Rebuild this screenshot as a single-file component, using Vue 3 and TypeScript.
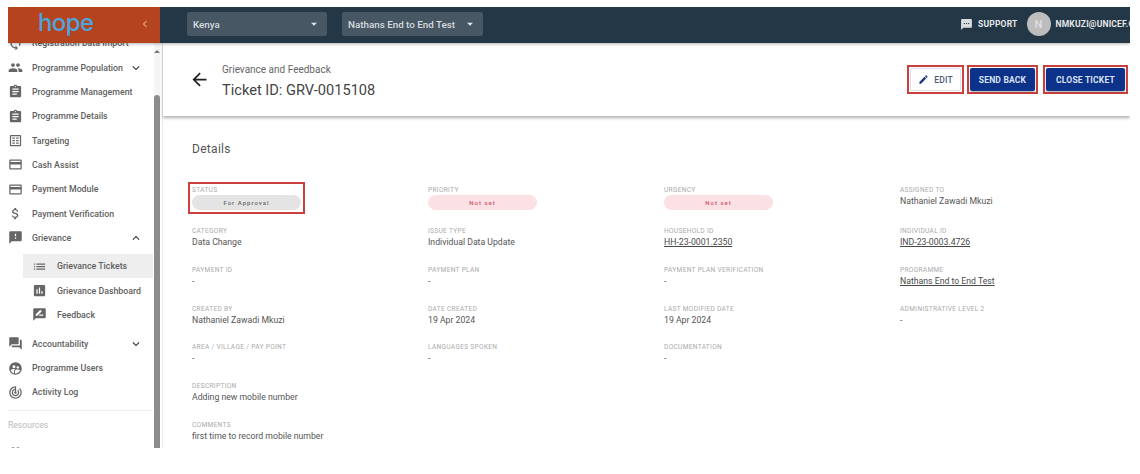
<script setup lang="ts">
interface NavItem { label: string; icon: string; sub?: boolean; active?: boolean; chevron?: 'up' | 'down' }
interface Field { label: string; value: string; kind?: 'link' | 'chip' | 'gray'; boxed?: boolean }

const P = {
  people: 'M16 11c1.66 0 2.99-1.34 2.99-3S17.66 5 16 5c-1.66 0-3 1.34-3 3s1.34 3 3 3zm-8 0c1.66 0 2.99-1.34 2.99-3S9.66 5 8 5C6.34 5 5 6.34 5 8s1.34 3 3 3zm0 2c-2.33 0-7 1.17-7 3.5V19h14v-2.5c0-2.33-4.67-3.5-7-3.5zm8 0c-.29 0-.62.02-.97.05 1.16.84 1.97 1.97 1.97 3.45V19h6v-2.5c0-2.33-4.67-3.5-7-3.5z',
  assignment: 'M19 3h-4.18C14.4 1.84 13.3 1 12 1c-1.3 0-2.4.84-2.82 2H5c-1.1 0-2 .9-2 2v14c0 1.1.9 2 2 2h14c1.1 0 2-.9 2-2V5c0-1.1-.9-2-2-2zm-7 0c.55 0 1 .45 1 1s-.45 1-1 1-1-.45-1-1 .45-1 1-1zm2 14H7v-2h7v2zm3-4H7v-2h10v2zm0-4H7V7h10v2z',
  target: 'M19 3H5c-1.1 0-2 .9-2 2v14c0 1.1.9 2 2 2h14c1.1 0 2-.9 2-2V5c0-1.1-.9-2-2-2zm0 16H5V5h14v14zM7 7h4v2H7V7zm6 0h4v2h-4V7zm-6 4h4v2H7v-2zm6 0h4v2h-4v-2zm-6 4h4v2H7v-2zm6 0h4v2h-4v-2z',
  card: 'M20 4H4c-1.11 0-1.99.89-1.99 2L2 18c0 1.11.89 2 2 2h16c1.11 0 2-.89 2-2V6c0-1.11-.89-2-2-2zm0 14H4v-6h16v6zm0-10H4V6h16v2z',
  money: 'M11.8 10.9c-2.27-.59-3-1.2-3-2.15 0-1.09 1.01-1.85 2.7-1.85 1.78 0 2.44.85 2.5 2.1h2.21c-.07-1.72-1.12-3.3-3.21-3.81V3h-3v2.16c-1.94.42-3.5 1.68-3.5 3.61 0 2.31 1.91 3.46 4.7 4.13 2.5.6 3 1.48 3 2.41 0 .69-.49 1.79-2.7 1.79-2.06 0-2.87-.92-2.98-2.1h-2.2c.12 2.19 1.76 3.42 3.68 3.83V21h3v-2.15c1.95-.37 3.5-1.5 3.5-3.55 0-2.84-2.43-3.81-4.7-4.4z',
  announce: 'M20 2H4c-1.1 0-1.99.9-1.99 2L2 22l4-4h14c1.1 0 2-.9 2-2V4c0-1.1-.9-2-2-2zm-7 12h-2v-2h2v2zm0-4h-2V6h2v4z',
  list: 'M3 13h2v-2H3v2zm0 4h2v-2H3v2zm0-8h2V7H3v2zm4 4h14v-2H7v2zm0 4h14v-2H7v2zM7 7v2h14V7H7z',
  assess: 'M19 3H5c-1.1 0-2 .9-2 2v14c0 1.1.9 2 2 2h14c1.1 0 2-.9 2-2V5c0-1.1-.9-2-2-2zM9 17H7v-7h2v7zm4 0h-2V7h2v10zm4 0h-2v-4h2v4z',
  review: 'M20 2H4c-1.1 0-2 .9-2 2v18l4-4h14c1.1 0 2-.9 2-2V4c0-1.1-.9-2-2-2zM6 14v-2.47l6.88-6.88c.2-.2.51-.2.71 0l1.77 1.77c.2.2.2.51 0 .71L8.47 14H6zm12 0h-7.5l2-2H18v2z',
  forum: 'M21 6h-2v9H6v2c0 .55.45 1 1 1h11l4 4V7c0-.55-.45-1-1-1zm-4 6V3c0-.55-.45-1-1-1H3c-.55 0-1 .45-1 1v14l4-4h10c.55 0 1-.45 1-1z',
  users: 'M11.99 2c-5.52 0-10 4.48-10 10s4.48 10 10 10 10-4.48 10-10-4.48-10-10-10zm3.61 6.34c1.07 0 1.93.86 1.93 1.93 0 1.07-.86 1.93-1.93 1.93-1.07 0-1.93-.86-1.93-1.93-.01-1.07.86-1.93 1.93-1.93zm-6-1.58c1.3 0 2.36 1.06 2.36 2.36 0 1.3-1.06 2.36-2.36 2.36s-2.36-1.06-2.36-2.36c0-1.31 1.05-2.36 2.36-2.36zm0 9.13v3.75c-2.4-.75-4.3-2.6-5.14-4.96 1.05-1.12 3.67-1.69 5.14-1.69.53 0 1.2.08 1.9.22-1.64.87-1.9 2.02-1.9 2.68zM11.99 20c-.27 0-.53-.01-.79-.04v-4.07c0-1.42 2.94-2.13 4.4-2.13 1.07 0 2.92.39 3.84 1.15-1.17 2.97-4.06 5.09-7.45 5.09z',
  log: 'M19.07 4.93l-1.41 1.41C19.1 7.79 20 9.79 20 12c0 4.42-3.58 8-8 8s-8-3.58-8-8c0-4.08 3.05-7.44 7-7.93v2.02C8.16 6.57 6 9.03 6 12c0 3.31 2.69 6 6 6s6-2.69 6-6c0-1.66-.67-3.16-1.76-4.24l-1.41 1.41C15.55 9.9 16 10.9 16 12c0 2.21-1.79 4-4 4s-4-1.79-4-4c0-1.86 1.28-3.41 3-3.86v2.14c-.6.35-1 .98-1 1.72 0 1.1.9 2 2 2s2-.9 2-2c0-.74-.4-1.38-1-1.72V2h-1C6.48 2 2 6.48 2 12s4.48 10 10 10 10-4.48 10-10c0-2.76-1.12-5.26-2.93-7.07z',
  sync: 'M12 4V1L8 5l4 4V6c3.31 0 6 2.69 6 6 0 1.01-.25 1.97-.7 2.8l1.46 1.46C19.54 15.03 20 13.57 20 12c0-4.42-3.58-8-8-8zm0 14c-3.31 0-6-2.69-6-6 0-1.01.25-1.97.7-2.8L5.24 7.74C4.46 8.97 4 10.43 4 12c0 4.42 3.58 8 8 8v3l4-4-4-4v3z',
  down: 'M16.59 8.59L12 13.17 7.41 8.59 6 10l6 6 6-6z',
  up: 'M12 8l-6 6 1.41 1.41L12 10.83l4.59 4.58L18 14z',
}

const nav: NavItem[] = [
  { label: 'Registration Data Import', icon: P.sync },
  { label: 'Programme Population', icon: P.people, chevron: 'down' },
  { label: 'Programme Management', icon: P.assignment },
  { label: 'Programme Details', icon: P.assignment },
  { label: 'Targeting', icon: P.target },
  { label: 'Cash Assist', icon: P.card },
  { label: 'Payment Module', icon: P.card },
  { label: 'Payment Verification', icon: P.money },
  { label: 'Grievance', icon: P.announce, chevron: 'up' },
]
const subNav: NavItem[] = [
  { label: 'Grievance Tickets', icon: P.list, active: true },
  { label: 'Grievance Dashboard', icon: P.assess },
  { label: 'Feedback', icon: P.review },
]
const nav2: NavItem[] = [
  { label: 'Accountability', icon: P.forum, chevron: 'down' },
  { label: 'Programme Users', icon: P.users },
  { label: 'Activity Log', icon: P.log },
]

const fields: Field[] = [
  { label: 'STATUS', value: 'For Approval', kind: 'gray', boxed: true },
  { label: 'PRIORITY', value: 'Not set', kind: 'chip' },
  { label: 'URGENCY', value: 'Not set', kind: 'chip' },
  { label: 'ASSIGNED TO', value: 'Nathaniel Zawadi Mkuzi' },
  { label: 'CATEGORY', value: 'Data Change' },
  { label: 'ISSUE TYPE', value: 'Individual Data Update' },
  { label: 'HOUSEHOLD ID', value: 'HH-23-0001.2350', kind: 'link' },
  { label: 'INDIVIDUAL ID', value: 'IND-23-0003.4726', kind: 'link' },
  { label: 'PAYMENT ID', value: '-' },
  { label: 'PAYMENT PLAN', value: '-' },
  { label: 'PAYMENT PLAN VERIFICATION', value: '-' },
  { label: 'PROGRAMME', value: 'Nathans End to End Test', kind: 'link' },
  { label: 'CREATED BY', value: 'Nathaniel Zawadi Mkuzi' },
  { label: 'DATE CREATED', value: '19 Apr 2024' },
  { label: 'LAST MODIFIED DATE', value: '19 Apr 2024' },
  { label: 'ADMINISTRATIVE LEVEL 2', value: '-' },
  { label: 'AREA / VILLAGE / PAY POINT', value: '-' },
  { label: 'LANGUAGES SPOKEN', value: '-' },
  { label: 'DOCUMENTATION', value: '-' },
]
</script>

<template>
  <div class="app">
    <header class="topbar">
      <div class="brand">
        <span class="logo">hope</span>
        <svg class="collapse" viewBox="0 0 24 24"><path d="M15.41 7.41L14 6l-6 6 6 6 1.41-1.41L10.83 12z" /></svg>
      </div>
      <div class="selects">
        <div class="select first"><span>Kenya</span><svg viewBox="0 0 24 24"><path d="M7 10l5 5 5-5z" /></svg></div>
        <div class="select"><span>Nathans End to End Test</span><svg viewBox="0 0 24 24"><path d="M7 10l5 5 5-5z" /></svg></div>
      </div>
      <div class="account">
        <svg class="support-icon" viewBox="0 0 24 24"><path d="M20 2H4c-1.1 0-1.99.9-1.99 2L2 22l4-4h14c1.1 0 2-.9 2-2V4c0-1.1-.9-2-2-2zM9 11H7V9h2v2zm4 0h-2V9h2v2zm4 0h-2V9h2v2z" /></svg>
        <span class="support">SUPPORT</span>
        <span class="avatar">N</span>
        <span class="email">NMKUZI@UNICEF.ORG</span>
      </div>
    </header>

    <div class="body">
      <aside class="sidebar">
        <nav class="nav">
          <a v-for="i in nav" :key="i.label" class="item">
            <svg class="ico" viewBox="0 0 24 24"><path :d="i.icon" /></svg>
            <span class="txt">{{ i.label }}</span>
            <svg v-if="i.chevron" class="chev" viewBox="0 0 24 24"><path :d="i.chevron === 'up' ? P.up : P.down" /></svg>
          </a>
          <div class="subs">
            <a v-for="i in subNav" :key="i.label" class="item sub" :class="{ active: i.active }">
              <svg class="ico" viewBox="0 0 24 24"><path :d="i.icon" /></svg>
              <span class="txt">{{ i.label }}</span>
            </a>
          </div>
          <a v-for="i in nav2" :key="i.label" class="item">
            <svg class="ico" viewBox="0 0 24 24"><path :d="i.icon" /></svg>
            <span class="txt">{{ i.label }}</span>
            <svg v-if="i.chevron" class="chev" viewBox="0 0 24 24"><path :d="P.down" /></svg>
          </a>
          <div class="divider"></div>
          <div class="resources">Resources</div>
          <a class="item">
            <svg class="ico" viewBox="0 0 24 24"><path :d="P.people" /></svg>
            <span class="txt">Knowledge Base</span>
          </a>
        </nav>
        <div class="scrollbar">
          <span class="arrow"></span>
          <span class="thumb"></span>
        </div>
      </aside>

      <main class="main">
        <section class="page-head">
          <svg class="back" viewBox="0 0 24 24"><path d="M20 11H7.83l5.59-5.59L12 4l-8 8 8 8 1.41-1.41L7.83 13H20v-2z" /></svg>
          <div class="titles">
            <div class="crumb">Grievance and Feedback</div>
            <h1>Ticket ID: GRV-0015108</h1>
          </div>
          <div class="actions">
            <span class="mark"><button class="btn outline">
              <svg viewBox="0 0 24 24"><path d="M3 17.25V21h3.75L17.81 9.94l-3.75-3.75L3 17.25zM20.71 7.04c.39-.39.39-1.02 0-1.41l-2.34-2.34c-.39-.39-1.02-.39-1.41 0l-1.83 1.83 3.75 3.75 1.83-1.83z" /></svg>
              EDIT
            </button></span>
            <span class="mark"><button class="btn solid back-btn">SEND BACK</button></span>
            <span class="mark last"><button class="btn solid close-btn">CLOSE TICKET</button></span>
          </div>
        </section>

        <section class="details">
          <h2>Details</h2>
          <div class="grid">
            <div v-for="f in fields" :key="f.label" class="field" :class="{ boxed: f.boxed }">
              <div class="label">{{ f.label }}</div>
              <div v-if="f.kind === 'chip'" class="pill red">{{ f.value }}</div>
              <div v-else-if="f.kind === 'gray'" class="pill gray">{{ f.value }}</div>
              <a v-else-if="f.kind === 'link'" class="value link">{{ f.value }}</a>
              <div v-else class="value">{{ f.value }}</div>
            </div>
            <div class="field full">
              <div class="label">DESCRIPTION</div>
              <div class="value">Adding new mobile number</div>
            </div>
            <div class="field full">
              <div class="label">COMMENTS</div>
              <div class="value">first time to record mobile number</div>
            </div>
          </div>
        </section>
      </main>
    </div>
  </div>
</template>

<style>
html, body { margin: 0; background: #fff; overflow: hidden; }
</style>

<style scoped>
.app {
  width: 1122px;
  height: 441px;
  margin: 7px 0 0 8px;
  overflow: hidden;
  font-family: Roboto, "Liberation Sans", sans-serif;
  display: flex;
  flex-direction: column;
  background: #fff;
}
.topbar {
  height: 36px;
  flex: none;
  display: flex;
  align-items: center;
  background: #243746;
  color: #fff;
  box-shadow: 0 1px 3px rgba(0, 0, 0, .3);
  position: relative;
  z-index: 2;
}
.brand {
  width: 152px;
  height: 36px;
  flex: none;
  display: flex;
  align-items: center;
  justify-content: space-between;
  background: #b4431e;
  padding: 0 8px 0 30px;
  box-sizing: border-box;
}
.logo {
  font-family: Inter, Lato, sans-serif;
  font-size: 24px;
  font-weight: 500;
  line-height: 30px;
  letter-spacing: -.6px;
  color: #4da3dc;
  margin-bottom: 4px;
}
.collapse { width: 14px; height: 14px; fill: #e39a78; margin-bottom: 2px; }
.selects { display: flex; gap: 15px; margin: 0 0 2px 27px; }
.select {
  width: 141px;
  height: 24px;
  box-sizing: border-box;
  padding: 0 6px;
  display: flex;
  align-items: center;
  justify-content: space-between;
  background: #475763;
  border-radius: 2px;
  font-size: 9.8px;
  font-weight: 500;
  color: #d6dbdf;
}
.select.first { width: 140px; }
.select svg { width: 14px; height: 14px; fill: #e6e9eb; }
.account {
  margin: 0 0 2px auto;
  display: flex;
  align-items: center;
  width: 170px;
  flex: none;
  overflow: hidden;
  white-space: nowrap;
  font-size: 8.5px;
  font-weight: 700;
  letter-spacing: .2px;
  color: #e4e7ea;
}
.support-icon { width: 13px; height: 13px; fill: #d8dcdf; margin-right: 5px; flex: none; }
.support { margin-right: 9px; }
.avatar {
  width: 24px;
  height: 24px;
  flex: none;
  border-radius: 50%;
  background: #bdbdbd;
  display: flex;
  align-items: center;
  justify-content: center;
  font-size: 11px;
  font-weight: 400;
  margin-right: 5px;
}
.body { flex: 1; min-height: 0; display: flex; }
.sidebar {
  width: 154px;
  flex: none;
  position: relative;
  overflow: hidden;
  border-right: 1px solid #ececec;
}
.nav { width: 145px; margin-top: -12px; }
.item {
  height: 24.35px;
  display: flex;
  align-items: center;
  color: #5f5f5f;
  font-size: 8.8px;
  font-weight: 500;
  white-space: nowrap;
}
.ico { width: 15px; height: 15px; fill: #666; margin: 0 9px 0 0; flex: none; }
.txt { flex: 1; }
.chev { width: 14px; height: 14px; fill: #333; margin-right: 10px; flex: none; }
.subs { padding: 4px 0 4.5px 15px; width: 130px; }
.item.sub { padding-left: 9px; }
.item.sub .ico { margin-right: 10px; }
.item.active { background: #eeeeee; }
.divider { height: 1px; background: #f0f0f0; margin: 5px 0 7px; }
.resources { font-size: 8.6px; color: #bbb; height: 14px; line-height: 14px; margin-bottom: 8px; }
.scrollbar {
  position: absolute;
  top: 0;
  bottom: 0;
  left: 146px;
  width: 6px;
  background: #f5f5f5;
  display: flex;
  flex-direction: column;
  align-items: center;
}
.arrow {
  margin-top: 7px;
  border: 3px solid transparent;
  border-top: 0;
  border-bottom: 3px solid #777;
}
.thumb { margin-top: 42px; flex: 1; width: 6px; background: #8c8c8c; border-radius: 3px 3px 0 0; }

.main { flex: 1; min-width: 0; }
.page-head {
  height: 73px;
  box-sizing: border-box;
  display: flex;
  align-items: center;
  padding: 0 0 0 26px;
  box-shadow: 0 2px 3px rgba(60, 60, 70, .4);
  position: relative;
}
.back { width: 21px; height: 21px; fill: #222; margin-right: 12px; }
.titles { flex: 1; padding-top: 4px; }
.crumb { font-size: 10px; line-height: 12px; color: #666; margin-bottom: 4px; }
h1 { margin: 0; font-size: 14.6px; line-height: 20px; font-weight: 400; color: #444; }
.actions { display: flex; gap: 3px; margin-right: 2px; }
.mark { display: block; border: 2px solid #c9403f; padding: 1px; }
.mark.last { margin-left: 2px; }
.btn {
  font-family: inherit;
  height: 23px;
  border-radius: 2px;
  font-size: 8.5px;
  font-weight: 700;
  letter-spacing: .2px;
  border: 0;
  padding: 0;
  display: flex;
  align-items: center;
  justify-content: center;
}
.outline { width: 51px; background: #fff; color: #4b5c78; border: 1px solid #dfe3ef; box-sizing: border-box; font-weight: 500; gap: 5px; }
.outline svg { width: 11px; height: 11px; fill: #1f3a7d; }
.solid { background: #0c3289; color: #dde3f2; box-shadow: 0 1px 2px rgba(0,0,0,.3); }
.back-btn { width: 65px; }
.close-btn { width: 79px; }

.details { padding: 25px 0 0 29px; }
h2 { margin: 0 0 28px; font-size: 12px; line-height: 16px; font-weight: 400; letter-spacing: .3px; color: #555; }
.grid {
  display: grid;
  grid-template-columns: repeat(4, 236px);
  grid-template-rows: 41px;
  grid-auto-rows: 38.8px;
}
.field { min-width: 0; }
.full { grid-column: 1 / -1; }
.boxed { position: relative; }
.boxed::after {
  content: '';
  position: absolute;
  left: -4px;
  top: -3px;
  width: 113px;
  height: 28px;
  border: 2px solid #c9403f;
}
.label { font-size: 6.6px; line-height: 10px; letter-spacing: .3px; color: #aaa; }
.value { font-size: 8.7px; line-height: 13px; color: #555; }
.link { display: block; width: fit-content; text-decoration: underline; color: #4a4a4a; }
.pill {
  width: 109px;
  height: 15px;
  border-radius: 8px;
  display: flex;
  align-items: center;
  justify-content: center;
  font-size: 6px;
  font-weight: 500;
  letter-spacing: 1px;
}
.gray { background: #e4e4e4; color: #666; }
.red { background: #fbe0e4; color: #c9546a; }
</style>
